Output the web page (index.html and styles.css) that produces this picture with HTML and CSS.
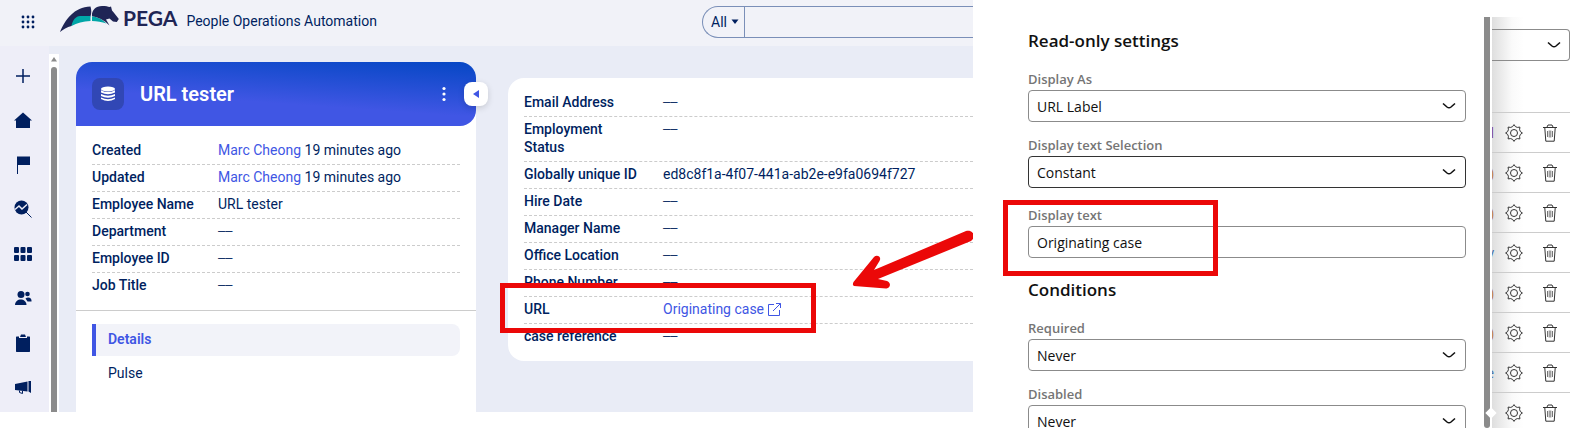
FILE: index.html
```html
<!DOCTYPE html>
<html lang="en">
<head>
  <meta charset="UTF-8" />
  <meta name="viewport" content="width=device-width, initial-scale=1" />
  <title>People Operations Automation</title>
  <link rel="stylesheet" href="styles.css">
</head>
<body>
  <svg class="sprite" aria-hidden="true">
    <symbol id="chevron" viewBox="0 0 14 8">
      <path d="M1 1.5 L5 5 Q7 6.6 9 5 L13 1.5" fill="none" stroke="#111" stroke-width="1.6"/>
    </symbol>
    <symbol id="gear" viewBox="0 0 18 18">
      <path d="M7.6 2.6 L9 .6 L10.4 2.6 L12.3 3.4 L14.9 3.1 L14.6 5.7 L15.4 7.6 L17.4 9 L15.4 10.4 L14.6 12.3 L14.9 14.9 L12.3 14.6 L10.4 15.4 L9 17.4 L7.6 15.4 L5.7 14.6 L3.1 14.9 L3.4 12.3 L2.6 10.4 L.6 9 L2.6 7.6 L3.4 5.7 L3.1 3.1 L5.7 3.4 Z" fill="none" stroke="#333" stroke-linejoin="round"/>
      <circle cx="9" cy="9" r="3.5" fill="none" stroke="#333"/>
    </symbol>
    <symbol id="trash" viewBox="0 0 14 18">
      <path d="M0 3.5 H14 M4 3 L5 1 H9 L10 3 M1.8 4 L2.8 17.2 H11.2 L12.2 4" fill="none" stroke="#333"/>
      <path d="M4.5 7 V13 M6.2 6.5 V13.5 M7.8 6.5 V13.5 M9.5 7 V13" stroke="#777"/>
    </symbol>
  </svg>

  <div class="page">
    <div class="app">
      <header class="topbar">
        <button class="apps" aria-label="Switch application">
          <svg width="14" height="14" viewBox="0 0 14 14" fill="#001f5f">
            <circle cx="2" cy="2" r="1.4"/><circle cx="7" cy="2" r="1.4"/><circle cx="12" cy="2" r="1.4"/>
            <circle cx="2" cy="7" r="1.4"/><circle cx="7" cy="7" r="1.4"/><circle cx="12" cy="7" r="1.4"/>
            <circle cx="2" cy="12" r="1.4"/><circle cx="7" cy="12" r="1.4"/><circle cx="12" cy="12" r="1.4"/>
          </svg>
        </button>
        <a class="brand" href="#">
          <svg width="60" height="28" viewBox="0 0 60 28">
            <path d="M0 26 C5 14 14 1 30.500 .5 C31.500 4 31.500 7 30.500 10.500 C21 10.500 16 12 11.500 20 C7 21 3 23.500 0 26 Z" fill="#1f2555"/>
            <path d="M11.500 20 C12.500 14 16 10.300 20 10 H30.500 V15 C23 15.500 17 17 11.500 20 Z M32 10.300 C38 11 43 14 46.500 17.500 C42 16 37 15 32 15 Z" fill="#00a6a7"/>
            <path d="M32 10 C31.500 4 36 0 42 0 C46 0 48 .5 49.500 1 L51 .5 L52 4.500 C54.500 7 56 9.500 58.800 13 L56.800 16 L53 15.500 L49.500 12.500 L46 13.500 L49.500 19.500 C44 14 38 11 32 10 Z" fill="#1f2555"/>
          </svg>
          <span class="logo-text">PEGA</span>
          <span class="app-name">People Operations Automation</span>
        </a>
        <div class="search">
          <div class="scope">
            <select aria-label="Search in"><option>All</option></select>
            <svg width="8" height="6" viewBox="0 0 8 6"><path d="M.5 .5 H7.500 L4 5 Z" fill="#001f5f"/></svg>
          </div>
          <input type="text" aria-label="Search">
        </div>
      </header>

      <div class="workspace">
        <nav class="sidebar">
          <a href="#" aria-label="Create"><svg viewBox="0 0 18 18"><path d="M9 2 V16 M2 9 H16" stroke="#001f5f" stroke-width="1.500"/></svg></a>
          <a href="#" aria-label="Home"><svg viewBox="0 0 18 18"><path d="M9 1.500 L18 9.500 H16 V17 H2 V9.500 H0 Z" fill="#001f5f"/></svg></a>
          <a href="#" aria-label="Channels"><svg viewBox="0 0 18 18"><path d="M3.500 .5 V18" stroke="#001f5f"/><path d="M4 .5 H16 V9 H4 Z" fill="#001f5f"/></svg></a>
          <a href="#" aria-label="Insights"><svg viewBox="0 0 18 18"><circle cx="7.500" cy="7.500" r="7" fill="#001f5f"/><path d="M1 9.500 L5 6 L8 9 L13 4.500" fill="none" stroke="#eeeef8" stroke-width="1.500"/><path d="M12 12 L17.500 17.500" stroke="#001f5f"/></svg></a>
          <a href="#" aria-label="Dashboards"><svg viewBox="0 0 18 18" fill="#001f5f"><rect y="2" width="5" height="6" rx="1"/><rect x="6.500" y="2" width="5" height="6" rx="1"/><rect x="13" y="2" width="5" height="6" rx="1"/><rect y="10" width="5" height="6" rx="1"/><rect x="6.500" y="10" width="5" height="6" rx="1"/><rect x="13" y="10" width="5" height="6" rx="1"/></svg></a>
          <a href="#" aria-label="People"><svg viewBox="0 0 18 18" fill="#001f5f"><circle cx="7" cy="5.500" r="3.500"/><path d="M1 16 C1 8.500 12.500 8.500 12.500 16 Z"/><circle cx="13.500" cy="5" r="2.300"/><path d="M11.500 9.500 C14 7.500 18 8.500 17.500 12.500 H13.500 Z"/></svg></a>
          <a href="#" aria-label="Tasks"><svg viewBox="0 0 18 18"><path d="M2.500 2.500 H5 V4 H13 V2.500 H15.500 L16 3 V17.500 L15.500 18 H2.500 L2 17.500 V3 Z M6 3 L7 .5 H11 L12 3 Z" fill="#001f5f"/></svg></a>
          <a href="#" aria-label="Announcements"><svg viewBox="0 0 18 18"><path d="M1 6 L13.500 3.500 V13.500 L1 12 Z M14.500 3 H17 V15 L14.500 13.500 Z" fill="#001f5f"/><path d="M5.500 12.500 V14.500 L8.500 15.500 V13" fill="none" stroke="#001f5f"/></svg></a>
        </nav>
        <div class="app-scroll">
          <svg width="6" height="5" viewBox="0 0 6 5"><path d="M3 0 L6 4.500 H0 Z" fill="#8b8b8b"/></svg>
          <div class="thumb"></div>
        </div>

        <main class="content">
          <section class="case">
            <div class="case-head">
              <span class="case-icon">
                <svg width="14" height="16" viewBox="0 0 14 16" fill="#fff">
                  <ellipse cx="7" cy="3" rx="7" ry="2.500"/>
                  <path d="M0 4.200 Q7 8 14 4.200 V6.500 Q7 10 0 6.500 Z M0 8 Q7 11.500 14 8 V10 Q7 13.500 0 10 Z M0 11.500 Q7 15 14 11.500 V13 Q7 17 0 13 Z"/>
                </svg>
              </span>
              <h1>URL tester</h1>
              <button class="kebab" aria-label="Actions">
                <svg width="4" height="16" viewBox="0 0 4 16" fill="#fff"><circle cx="2" cy="2.500" r="1.600"/><circle cx="2" cy="8" r="1.600"/><circle cx="2" cy="13.500" r="1.600"/></svg>
              </button>
              <button class="collapse" aria-label="Collapse summary">
                <svg width="6" height="8" viewBox="0 0 6 8"><path d="M6 0 V8 L0 4 Z" fill="#4056e4"/></svg>
              </button>
            </div>
            <dl class="fields">
              <div><dt>Created</dt><dd><a href="#">Marc Cheong</a> 19 minutes ago</dd></div>
              <div><dt>Updated</dt><dd><a href="#">Marc Cheong</a> 19 minutes ago</dd></div>
              <div><dt>Employee Name</dt><dd>URL tester</dd></div>
              <div><dt>Department</dt><dd class="empty">––</dd></div>
              <div><dt>Employee ID</dt><dd class="empty">––</dd></div>
              <div><dt>Job Title</dt><dd class="empty">––</dd></div>
            </dl>
            <nav class="tabs">
              <a class="active" href="#">Details</a>
              <a href="#">Pulse</a>
            </nav>
          </section>

          <section class="details">
            <dl class="fields wide">
              <div><dt>Email Address</dt><dd class="empty">––</dd></div>
              <div><dt>Employment Status</dt><dd class="empty">––</dd></div>
              <div><dt>Globally unique ID</dt><dd>ed8c8f1a-4f07-441a-ab2e-e9fa0694f727</dd></div>
              <div><dt>Hire Date</dt><dd class="empty">––</dd></div>
              <div><dt>Manager Name</dt><dd class="empty">––</dd></div>
              <div><dt>Office Location</dt><dd class="empty">––</dd></div>
              <div><dt>Phone Number</dt><dd class="empty">––</dd></div>
              <div class="marked"><dt>URL</dt><dd><a href="#">Originating case <svg width="13" height="13" viewBox="0 0 13 13" fill="none" stroke="#4056e4"><path d="M6 1.500 H.5 V12.500 H11.500 V7 M8 .5 H12.500 V5 M12.500 .5 L5 8"/></svg></a></dd></div>
              <div><dt>case reference</dt><dd class="empty">––</dd></div>
            </dl>
          </section>
        </main>
      </div>

      <svg class="arrow" width="122" height="60" viewBox="0 0 122 60">
        <path d="M114 1 C121 -1 125 7 119 11 L26 49 L35 51 C40 53 38 59 34 58.500 L2 56 Q0 55 1.500 52 L22 27 C25 24 30 27 27.500 31 L22 40 Z" fill="#eb0808"/>
      </svg>
    </div>

    <form class="settings">
      <div class="settings-body">
        <h2>Read-only settings</h2>
        <div class="field">
          <label for="display-as">Display As</label>
          <div class="picker"><select id="display-as"><option>URL Label</option></select><svg width="14" height="8"><use href="#chevron"/></svg></div>
        </div>
        <div class="field">
          <label for="text-selection">Display text Selection</label>
          <div class="picker focus"><select id="text-selection"><option>Constant</option></select><svg width="14" height="8"><use href="#chevron"/></svg></div>
        </div>
        <div class="field text-field">
          <label for="display-text">Display text</label>
          <input id="display-text" type="text" value="Originating case">
        </div>
        <h2>Conditions</h2>
        <div class="field">
          <label for="required">Required</label>
          <div class="picker"><select id="required"><option>Never</option></select><svg width="14" height="8"><use href="#chevron"/></svg></div>
        </div>
        <div class="field">
          <label for="disabled">Disabled</label>
          <div class="picker"><select id="disabled"><option>Never</option></select><svg width="14" height="8"><use href="#chevron"/></svg></div>
        </div>
      </div>
      <div class="settings-scroll"></div>
    </form>

    <aside class="list">
      <div class="picker list-picker"><select aria-label="View"><option></option></select><svg width="14" height="8"><use href="#chevron"/></svg></div>
      <ul>
        <li><span class="tail purple">l</span><button aria-label="Edit"><svg width="18" height="18"><use href="#gear"/></svg></button><button aria-label="Delete"><svg width="14" height="18"><use href="#trash"/></svg></button></li>
        <li><span class="tail">)</span><button aria-label="Edit"><svg width="18" height="18"><use href="#gear"/></svg></button><button aria-label="Delete"><svg width="14" height="18"><use href="#trash"/></svg></button></li>
        <li><span class="tail">)</span><button aria-label="Edit"><svg width="18" height="18"><use href="#gear"/></svg></button><button aria-label="Delete"><svg width="14" height="18"><use href="#trash"/></svg></button></li>
        <li><span class="tail blue">y</span><button aria-label="Edit"><svg width="18" height="18"><use href="#gear"/></svg></button><button aria-label="Delete"><svg width="14" height="18"><use href="#trash"/></svg></button></li>
        <li><span class="tail">)</span><button aria-label="Edit"><svg width="18" height="18"><use href="#gear"/></svg></button><button aria-label="Delete"><svg width="14" height="18"><use href="#trash"/></svg></button></li>
        <li><span class="tail">)</span><button aria-label="Edit"><svg width="18" height="18"><use href="#gear"/></svg></button><button aria-label="Delete"><svg width="14" height="18"><use href="#trash"/></svg></button></li>
        <li><span class="tail blue">e</span><button aria-label="Edit"><svg width="18" height="18"><use href="#gear"/></svg></button><button aria-label="Delete"><svg width="14" height="18"><use href="#trash"/></svg></button></li>
        <li><span class="tail"></span><button aria-label="Edit"><svg width="18" height="18"><use href="#gear"/></svg></button><button aria-label="Delete"><svg width="14" height="18"><use href="#trash"/></svg></button></li>
      </ul>
    </aside>
  </div>
</body>
</html>
```
FILE: styles.css
```css
*, *::before, *::after {
  box-sizing: border-box;
}

body {
  margin: 0;
  background: #fff;
  color: #001f5f;
  font-family: Roboto, "Liberation Sans", sans-serif;
  font-size: 14px;
  line-height: 18px;
}

a {
  color: #4056e4;
  text-decoration: none;
}

button {
  display: grid;
  place-items: center;
  padding: 0;
  border: none;
  background: none;
  cursor: pointer;
}

h1, h2, dl, dd, ul {
  margin: 0;
  padding: 0;
}

svg {
  flex: none;
}

.sprite {
  display: none;
}

.page {
  display: flex;
  height: 100vh;
  overflow: hidden;
}

/* case application */
.app {
  position: relative;
  display: flex;
  flex-direction: column;
  flex: 1;
  min-width: 0;
  margin-bottom: 16px;
  background: #e9ecf6;
}

.topbar {
  display: flex;
  align-items: flex-start;
  flex: none;
  height: 46px;
  padding-top: 6px;
  background: #f1f2f8;
}

.apps {
  width: 56px;
  height: 32px;
}

.brand {
  display: flex;
  align-items: flex-start;
  flex: 1;
  padding-left: 4px;
  color: #001f5f;
}

.logo-text {
  margin: 3px 9px 0 3px;
  color: #1f2555;
  font-family: Lato, sans-serif;
  font-size: 21px;
  font-weight: 700;
}

.app-name {
  margin-top: 6px;
}

.search {
  display: flex;
  width: 271px;
  height: 32px;
  border: 1px solid #7a8fb8;
  border-right: none;
  border-radius: 16px 0 0 16px;
}

.scope {
  display: flex;
  align-items: center;
  width: 42px;
  padding-left: 8px;
  border-right: 1px solid #7a8fb8;
}

.scope select {
  width: 20px;
  padding: 0;
  border: none;
  background: none;
  appearance: none;
  color: #001f5f;
  font: inherit;
}

.search input {
  flex: 1;
  min-width: 0;
  border: none;
  background: none;
}

.workspace {
  display: flex;
  flex: 1;
  min-height: 0;
}

.sidebar {
  display: flex;
  flex-direction: column;
  justify-content: space-between;
  width: 49px;
  padding: 21px 0 16px 14px;
  background: #eeeef8;
}

.sidebar a, .sidebar svg {
  display: block;
  width: 18px;
  height: 18px;
}

.app-scroll {
  display: flex;
  flex-direction: column;
  align-items: center;
  gap: 5px;
  width: 10px;
  margin-top: 8px;
  padding-top: 3px;
  background: #fff;
}

.thumb {
  flex: 1;
  width: 6px;
  border-radius: 3px 3px 0 0;
  background: #8b8b8b;
}

.content {
  display: flex;
  flex: 1;
  gap: 32px;
  min-width: 0;
  padding: 16px 0 0 17px;
}

.case {
  width: 400px;
  border-radius: 16px 16px 0 0;
  background: #fff;
}

.case-head {
  position: relative;
  display: flex;
  align-items: center;
  gap: 16px;
  height: 64px;
  padding: 0 24px 0 16px;
  border-radius: 16px 16px 16px 0;
  background: linear-gradient(184deg, #0547c4, #4056e4 60%);
}

.case-icon {
  display: grid;
  place-items: center;
  width: 32px;
  height: 32px;
  border-radius: 8px;
  background: #3147b5;
}

.case-head h1 {
  flex: 1;
  color: #fff;
  font-size: 20px;
  font-weight: 600;
}

.kebab {
  width: 16px;
  height: 24px;
}

/* sits over the card's right edge */
.collapse {
  position: absolute;
  top: 20px;
  right: -12px;
  width: 24px;
  height: 24px;
  border-radius: 8px;
  background: #fff;
  box-shadow: 0 2px 6px rgba(0, 0, 0, 0.15);
}

.fields {
  padding: 12px 16px 11px;
}

.fields > div {
  display: flex;
  padding: 3px 0 5px;
  border-bottom: 1px dashed #ccc;
}

.fields > div:last-child {
  border-bottom: none;
}

.fields dt {
  width: 126px;
  font-weight: 500;
}

.wide dt {
  width: 139px;
  padding-right: 20px;
}

/* this face joins the two dashes into one line */
.empty {
  font-family: "Liberation Sans", sans-serif;
  font-size: 13px;
}

.tabs {
  display: flex;
  flex-direction: column;
  gap: 2px;
  padding: 13px 16px;
  border-top: 1px solid #ccc;
}

.tabs a {
  padding: 6px 16px 8px;
  color: #001f5f;
}

.tabs .active {
  padding-left: 12px;
  border-left: 4px solid #4056e4;
  border-radius: 0 8px 8px 0;
  background: #f2f3f9;
  color: #4056e4;
  font-weight: 600;
}

.details {
  flex: 1;
  align-self: flex-start;
  min-width: 0;
  margin-top: 16px;
  border-radius: 16px 0 0 16px;
  background: #fff;
}

.details .fields {
  padding-right: 0;
}

.details svg {
  vertical-align: -2px;
}

/* red callouts, drawn over the rows they point at */
.marked, .text-field {
  position: relative;
}

.marked::after, .text-field::after {
  content: "";
  position: absolute;
  border: 5px solid #eb0808;
  pointer-events: none;
}

.marked::after {
  top: -14px;
  left: -24px;
  width: 316px;
  height: 50px;
}

.arrow {
  position: absolute;
  top: 230px;
  right: -1px;
}

/* settings panel, lies over the field list */
.settings {
  position: relative;
  z-index: 1;
  display: flex;
  gap: 18px;
  width: 519px;
  padding: 0 2px 0 55px;
  background: #fff;
  color: #111;
  font-family: "Open Sans", "Noto Sans", sans-serif;
}

.settings-body {
  flex: 1;
  padding-top: 29px;
}

.settings h2 {
  margin-bottom: 17px;
  font-size: 17px;
  font-weight: 600;
  line-height: 24px;
}

.field {
  display: grid;
  gap: 2px;
  margin-bottom: 14px;
}

.field label {
  color: #757575;
  font-size: 13px;
  font-weight: 600;
}

.text-field {
  margin: 18px 0 20px;
}

.text-field::after {
  top: -6px;
  left: -25px;
  width: 215px;
  height: 76px;
}

.picker {
  display: grid;
  align-items: center;
}

.picker select, .picker svg {
  grid-area: 1 / 1;
}

.picker svg {
  justify-self: end;
  margin-right: 10px;
  pointer-events: none;
}

.picker select, .text-field input {
  width: 100%;
  height: 32px;
  padding: 0 8px;
  border: 1px solid #8b8b8b;
  border-radius: 4px;
  background: none;
  appearance: none;
  color: #111;
  font: inherit;
}

.picker select {
  padding-top: 2px;
}

.picker.focus select {
  border-color: #333;
}

.settings-scroll {
  width: 6px;
  margin-top: 17px;
  border-radius: 0 0 3px 3px;
  background: #8b8b8b;
}

/* drag handle */
.settings::after {
  content: "";
  position: absolute;
  bottom: 11px;
  right: -3px;
  width: 8px;
  height: 8px;
  background: #fff;
  transform: rotate(45deg);
}

.list {
  width: 78px;
  margin-top: 17px;
  padding-top: 12px;
  background: linear-gradient(90deg, #dedede, #fafafa 20px, #fff 32px);
  font-family: "Open Sans", "Noto Sans", sans-serif;
}

.list .list-picker select {
  border-left: none;
  border-radius: 0 4px 4px 0;
}

.list-picker svg {
  margin-right: 9px;
}

.list ul {
  margin-top: 51px;
  list-style: none;
}

.list li {
  display: flex;
  align-items: center;
  gap: 11px;
  height: 40px;
  border-top: 1px solid #ccc;
}

.list li button {
  width: 18px;
}

.list li button:last-child {
  margin-left: 7px;
}

.tail {
  display: flex;
  justify-content: flex-end;
  width: 2px;
  color: #b9793e;
}

.purple {
  color: #7b3a82;
}

.blue {
  color: #3f6ea8;
}
```
